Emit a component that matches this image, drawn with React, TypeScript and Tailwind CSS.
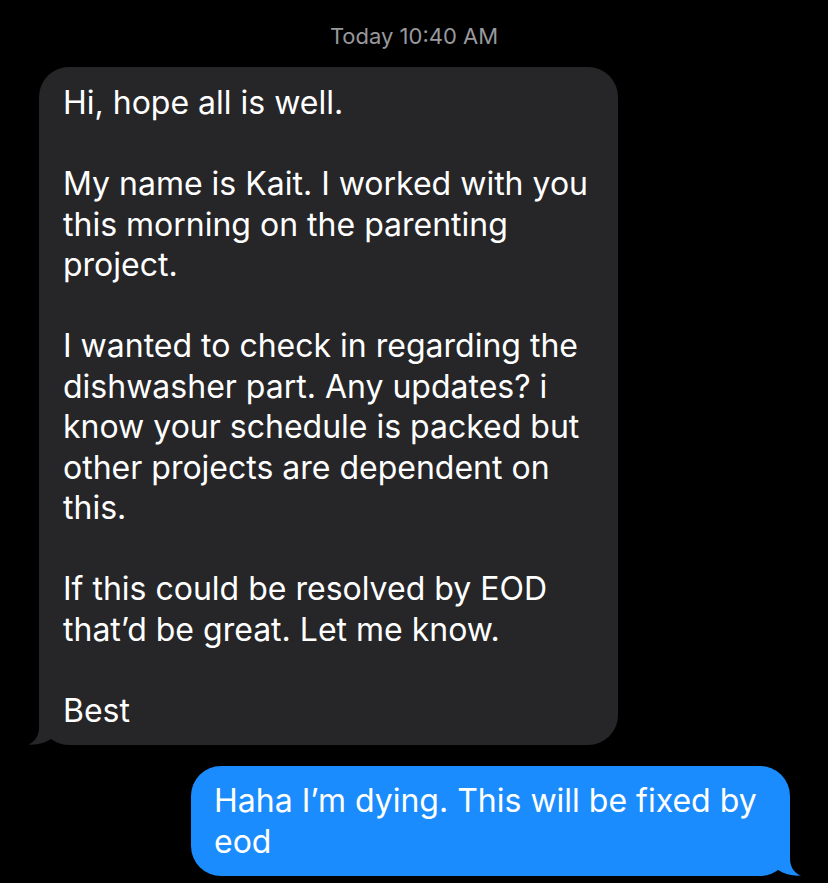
import React from 'react';

// tail drawn at the bottom corner of a bubble (left-hand orientation)
function Tail({ color, className }: { color: string; className: string }) {
  return (
    <svg
      className={className}
      width="30"
      height="31"
      viewBox="0 0 30 31"
      fill={color}
    >
      <path d="M11 0 L11 13 C11 22 7 28 0 30.5 C8 31.2 16 29.5 23 25 L30 25 L30 0 Z" />
    </svg>
  );
}

const gray = '#262628';
const blue = '#1b8cfd';

function App() {
  return (
    <div
      className="w-full h-[883px] bg-black overflow-hidden flex flex-col text-white"
      style={{ fontFamily: 'Inter, "Noto Sans", sans-serif' }}
    >
      <div className="pt-[23px] text-center text-[22px] leading-[26px] text-[#98989d]">
        Today 10:40 AM
      </div>

      {/* incoming */}
      <div className="relative mt-[18px] ml-[39px] w-[579px]">
        <div
          className="rounded-[30px] px-[24px] pt-[16px] pb-[14px] text-[32px] leading-[40.5px] tracking-normal whitespace-nowrap"
          style={{ background: gray }}
        >
          <p>Hi, hope all is well.</p>
          <p className="mt-[40.5px]">
            My name is Kait. I worked with you
            <br />
            this morning on the parenting
            <br />
            project.
          </p>
          <p className="mt-[40.5px]">
            I wanted to check in regarding the
            <br />
            dishwasher part. Any updates? i
            <br />
            know your schedule is packed but
            <br />
            other projects are dependent on
            <br />
            this.
          </p>
          <p className="mt-[40.5px]">
            If this could be resolved by EOD
            <br />
            that’d be great. Let me know.
          </p>
          <p className="mt-[40.5px]">Best</p>
        </div>
        <Tail color={gray} className="absolute left-[-11px] bottom-0" />
      </div>

      {/* outgoing */}
      <div className="relative self-end mt-[21px] mr-[38px] w-[599px]">
        <div
          className="rounded-[30px] px-[23px] pt-[15px] pb-[14px] text-[32px] leading-[40.5px] tracking-normal whitespace-nowrap"
          style={{ background: blue }}
        >
          <p>
            Haha I’m dying. This will be fixed by
            <br />
            eod
          </p>
        </div>
        <Tail color={blue} className="absolute right-[-11px] bottom-0 -scale-x-100" />
      </div>
    </div>
  );
}

export default App;
